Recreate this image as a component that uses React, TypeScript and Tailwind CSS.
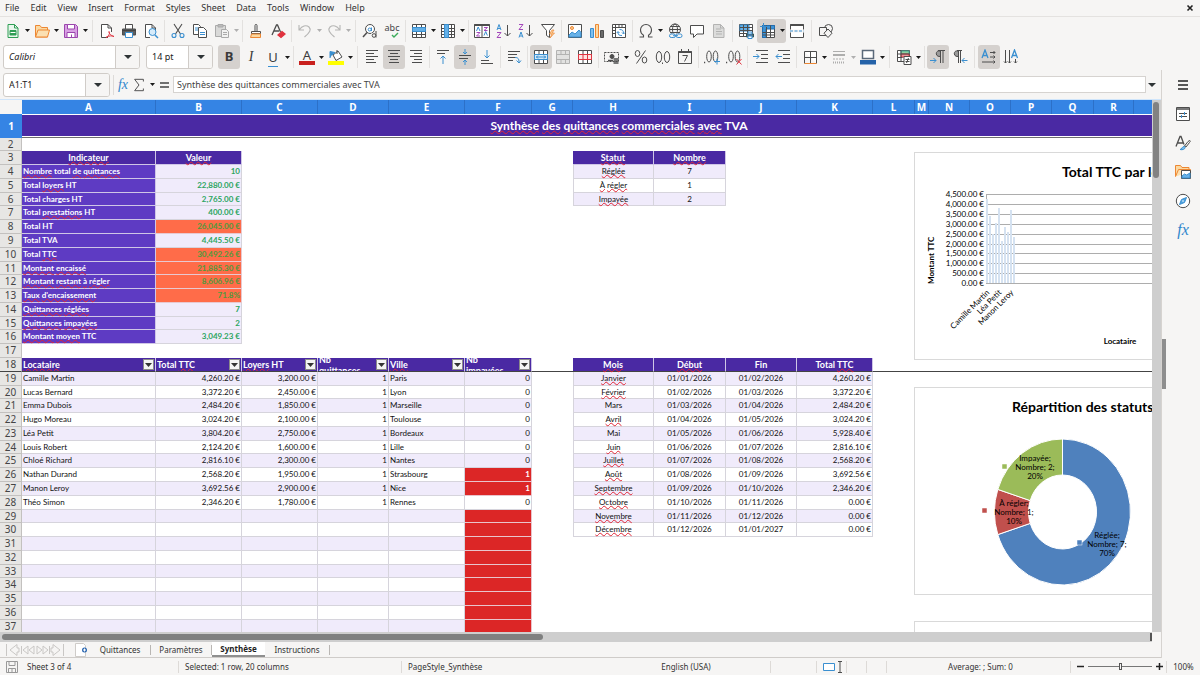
import React from "react";
import clsx from "clsx";

/* ---------- icons ---------- */

const G = "#4d4d4d";
const B = "#3a8fd0";
const O = "#ed8733";
const R = "#e0333f";

const icons: Record<string, React.ReactNode> = {
  new: <g fill="none" stroke="#2f9e55"><path d="M3 1.5h6.500l3.500 3.500v9.500H3z" fill="#e9f7ed" /><path d="M9.500 1.500v3.500H13" /><path d="M5 7.500h6v4.500H5z" fill="#2f9e55" /><path d="M5.500 9.500h5" stroke="#fff" /></g>,
  open: <g stroke={O} strokeLinejoin="round"><path d="M1.500 14V2.500h4.500l1.500 2h6v9.500z" fill="#fbd9a2" /><path d="M1.500 14l2.500-7h11.500l-2 7z" fill="#fbe0b2" /></g>,
  save: <g stroke="#9b46ad"><path d="M1.500 1.500h11l2 2v11h-13z" fill="#d9a0e4" /><path d="M4.500 1.500h7v4.500h-7zM4 9.500h8v5H4z" fill="#fff" /><path d="M8.500 11.500v3" /></g>,
  pdf: <g fill="none" stroke={G}><path d="M9 14.500H2.500v-13H9l3.500 3.500v4" fill="#fff" /><path d="M9 1.500V5h3.500" /><path d="M7 14.500c4-2 4-6 3-6s1 4 5 5c-2-1-5-1-8 1" stroke={R} /></g>,
  print: <g stroke={G}><path d="M4.500 6V1.500h7V6" fill="#fff" /><path d="M1.500 6h13v6h-13z" fill="#5d5f61" /><path d="M4.500 9.500h7v5h-7z" fill="#fff" stroke={B} /><path d="M1 7.500h14" stroke="#444" /></g>,
  preview: <g fill="none" stroke={G}><path d="M7 14.500H2.500v-13H9l3.500 3.500v3" fill="#fff" /><path d="M9 1.500V5h3.500" /><circle cx="9.500" cy="9" r="3.500" stroke={B} fill="#d6ebfa" /><path d="M12 12l3 3" stroke={B} strokeWidth="1.500" /></g>,
  cut: <g fill="none" stroke={G} strokeWidth="1.100"><path d="M4 1l6.500 10M12 1L5.500 11" /><circle cx="4" cy="12.500" r="2" stroke={B} /><circle cx="12" cy="12.500" r="2" stroke={B} /></g>,
  copy: <g fill="#fff" stroke={G}><path d="M1.500 1.500h5l2 2v8h-7z" /><path d="M3 5h3M3 7h3" stroke={B} /><path d="M6.500 4.500h5l3 3v7h-8z" /><path d="M8 9.500h5M8 11.500h5" stroke={B} /></g>,
  paste: <g fill="#d9d9d8" stroke="#aaa"><path d="M1.500 2.500h10v11h-10z" /><path d="M4 1.500h5v2.500H4z" fill="#bbb" /><path d="M7.500 6.500h5l2 2v6h-7z" fill="#f2f2f1" /><path d="M9 9.500h4M9 11.500h4" /></g>,
  brush: <g fill="none" stroke={G}><path d="M7 8V2.500c0-1.500 2-1.500 2 0V8" fill="#fff" /><path d="M3.500 8.500h9v2h-9z" fill="#fff" /><path d="M3.500 11h9v3.500h-10z" fill="#fbd9a2" stroke={O} /></g>,
  clear: <g fill="none" stroke={G} strokeWidth="1.300"><path d="M2 12L6.500 2h1l3 7M4 8h5" /><path d="M8 12l4-3.500 3 2.500-4 3.500z" fill={R} stroke={R} /></g>,
  undo: <g fill="none" stroke="#b5b5b4" strokeWidth="1.100"><path d="M2 2v5h5M2.500 6.500C5 3 9 1.500 12 4c2.500 2.500 1 5.500-4.500 10" /></g>,
  redo: <g fill="none" stroke="#b5b5b4" strokeWidth="1.100"><path d="M14 2v5H9M13.500 6.500C11 3 7 1.500 4 4c-2.500 2.500-1 5.500 4.500 10" /></g>,
  find: <g fill="none" stroke={G}><circle cx="8" cy="6" r="4.500" fill="#fff" /><path d="M5 9.500L1 14" strokeWidth="1.500" /><circle cx="7.700" cy="6.500" r="1.500" stroke={B} /><path d="M9.500 4.500v3.500" stroke={B} /><path d="M9.500 10H15v5.500H9.500z" fill="#f6f5f4" stroke="none" /><circle cx="12" cy="12.500" r="1.800" /><path d="M14 8v6.500" /></g>,
  rowIns: <g stroke={G} fill="#fff"><path d="M1.500 1.500h13v13h-13z" /><path d="M1.500 11.500h13M5.500 1.500v13M10.500 1.500v13" /><path d="M1.500 4.500h13v4h-13z" fill="#63b0e8" stroke={B} /></g>,
  colIns: <g stroke={G} fill="#fff"><path d="M1.500 1.500h13v13h-13z" /><path d="M1.500 5.500h13M1.500 8.500h13M1.500 11.500h13M11.500 1.500v13" /><path d="M4.500 1.500h4v13h-4z" fill="#63b0e8" stroke={B} /></g>,
  sort: <g stroke={G} fill="#fff"><path d="M.5 1.500h15v13H.5zM8 2v12" /><path d="M.5 2h15" strokeWidth="2" /><path d="M2.500 8l1.700-4L6 8M10 12.500l1.700-4 1.700 4" stroke={B} fill="none" /><path d="M2.500 9.500H6l-3.500 3.500H6M10 4.500h3.500L10 7.500h3.500" stroke="#a347ba" fill="none" /></g>,
  sortAsc: <g fill="none" stroke={G}><path d="M1 7l2-5.500L5 7M1.700 5.500h2.600" stroke={B} /><path d="M1 9.500h4L1 14.500h4" stroke="#a347ba" /><path d="M11.500 2v11M8.500 10l3 3 3-3" /></g>,
  sortDesc: <g fill="none" stroke={G}><path d="M1 1.500h4L1 6.500h4" stroke="#a347ba" /><path d="M1 14.500L3 9l2 5.500M1.700 13h2.600" stroke={B} /><path d="M11.500 2v11M8.500 10l3 3 3-3" /></g>,
  filter: <g fill="none" stroke={G}><path d="M1.500 1.500h13l-5 6v7l-3-2v-5z" fill="#fff" /><path d="M12 7l-2.500 4h2.500L10 15l4.500-5H12l2-3z" fill="#fbd09a" stroke={O} strokeWidth=".7" /></g>,
  image: <g stroke={G}><path d="M1.500 1.500h13v13h-13z" fill="#fff" /><path d="M2 14v-2l3-3 3 2 4-4 2 2.500V14z" fill="#68b2e8" stroke={B} /><circle cx="5" cy="5" r="1.500" fill="#fbd09a" stroke={O} /></g>,
  chart: <g><path d="M1.500 5.500h3v9h-3z" fill="#7fc0ee" stroke={B} /><path d="M6.500 1.500h3v13h-3z" fill="#fbd9a2" stroke={O} /><path d="M11.500 7.500h3v7h-3z" fill="#6a6a6a" stroke={G} /></g>,
  pivot: <g fill="none" stroke={G}><path d="M1.500 1.500h13v13h-13z" fill="#fff" /><path d="M2 4.500h12M4.500 2v12M2 7.500h2.500M2 10.500h2.500M8 2v2.500M11 2v2.500" /><path d="M7 9c0 3 1 3.500 4 3.500M5.800 10L7 8.500 8.500 10M8.500 6.500c3 0 4 1 4 4M11 9.500l1.500 1.500L14 9.500" stroke={B} /></g>,
  omega: <path d="M1.500 14h4v-1.800C3.500 11 2.500 9 2.500 7c0-3 2.300-5.500 5.500-5.500s5.500 2.500 5.500 5.500c0 2-1 4-3 5.200V14h4" fill="none" stroke={G} strokeWidth="1.100" />,
  link: <g fill="none" stroke={G}><circle cx="8" cy="6.500" r="5.500" /><ellipse cx="8" cy="6.500" rx="2.500" ry="5.500" /><path d="M2.500 6.500h11M3.500 3.500h9M3.500 9.500h9" /><path d="M2 10.500h12v5H2z" fill="#f6f5f4" stroke="none" /><rect x="2.500" y="11" width="6" height="3.500" rx="1.700" stroke={B} /><rect x="9" y="11" width="6" height="3.500" rx="1.700" stroke={B} /><path d="M6 12.700h5" stroke={B} /></g>,
  comment: <path d="M1.500 2.500h13v8.500H8L4.500 14.500V11h-3z" fill="#fff" stroke={G} />,
  page: <g stroke="#b3b3b2"><path d="M2.500 1.500h7l3.500 3.500v9.500H2.500z" fill="#dcdcdb" /><path d="M9.500 1.500V5H13M5 6h5M5 8.500h6M5 11h6" fill="none" /></g>,
  printArea: <g stroke={G} fill="#fff"><path d="M1.500 1.500h13v12h-13z" /><path d="M2 2h9v6H2z" fill="#63b0e8" stroke={B} /><path d="M5.500 2v11M9.500 2v11M2 4.500h12M2 7.500h12M2 10.500h12" fill="none" /><path d="M8.500 11h7v3h-7z" fill="#5a7184" stroke="#355" /><path d="M10 9h4v2h-4zM10 13h4v2.500h-4z" stroke={B} /></g>,
  freeze: <g stroke={G} fill="#fff"><path d="M2.500 2.500h12v12h-12z" /><path d="M2.500 2.500h12v3.500H6v8.500H2.500z" fill="#3d93d6" stroke="#226cae" /><path d="M2.500 9.500h12M2.500 12h12M6.500 2.500v12M10.500 2.500v12" fill="none" /><path d="M3.500 0v7M0 3.500h7" stroke={B} /></g>,
  split: <g stroke={G} fill="#fff"><path d="M1.500 6.500v-5h13v5M1.500 9.500v5h13v-5" /><path d="M1.500 2h13" strokeWidth="2" /><path d="M1 8h14" stroke={B} strokeDasharray="3 1.500" /></g>,
  shapes: <g fill="#f6f5f4" stroke={G}><circle cx="10.500" cy="5.500" r="4" /><path d="M1.500 4.500h7v8h-7z" /><path d="M10 6l4 4.200-4 4.300-4-4.300z" /></g>,
  alignL: <path d="M2 1.500h12M2 4.500h8M2 7.500h12M2 10.500h8M2 13.500h10" stroke={G} />,
  alignC: <path d="M2 1.500h12M4 4.500h8M2 7.500h12M4 10.500h8M3 13.500h10" stroke={G} />,
  alignR: <path d="M2 1.500h12M6 4.500h8M2 7.500h12M6 10.500h8M4 13.500h10" stroke={G} />,
  vTop: <g fill="none"><path d="M2 1.500h12M2 4.500h8" stroke={G} /><path d="M8 15V7M5.500 9.500L8 7l2.500 2.500" stroke={B} /></g>,
  vMid: <g fill="none"><path d="M2 6.500h12M2 9.500h9" stroke={G} /><path d="M8 0v5M6 3l2 2 2-2M8 16v-5M6 13l2-2 2 2" stroke={B} /></g>,
  vBot: <g fill="none"><path d="M2 11.500h8M2 14.500h12" stroke={G} /><path d="M8 1v8M5.500 6.500L8 9l2.500-2.500" stroke={B} /></g>,
  wrap: <g fill="none"><path d="M2 2.500h12M2 5.500h9M2 8.500h7M2 11.500h5" stroke={G} /><path d="M9 8.500c3 0 4 1 4 5M10.500 11.500l2.500 2.500 2-2.500" stroke={B} /></g>,
  merge: <g stroke={G} fill="#fff"><path d="M1.500 1.500h13v13h-13z" /><path d="M6 1.500v4M10.500 1.500v4M6 10.500v4M10.500 10.500v4" /><path d="M1.500 5.500h13v5h-13z" stroke={B} fill="#d3eafa" /><path d="M3 8h10M5 6.500L3.500 8 5 9.500M11 6.500L12.500 8 11 9.500" stroke={B} fill="none" /></g>,
  unmerge: <g stroke="#b3b3b2" fill="#e2e2e1"><path d="M1.500 1.500h13v13h-13zM1.500 5.500h13M1.500 10.500h13M6 1.500v4M10.500 1.500v4M6 10.500v4M10.500 10.500v4" /></g>,
  splitCell: <g stroke={G} fill="#fff"><path d="M1.500 1.500h13v13h-13zM6 1.500v13M10.500 1.500v13" /><path d="M1.500 5.500h13v5h-13zM6 5.500v5M10.500 5.500v5" stroke={R} fill="#fde3e3" /></g>,
  currency: <g stroke={G} fill="none"><path d="M.5 3.500h14v9H.5z" strokeDasharray="2 1" /><circle cx="8" cy="7.500" r="2" fill={G} /><path d="M4 11.500h5M9.500 10h5M9.500 12h5M9.500 14h5" strokeWidth="1.500" /></g>,
  percent: <g stroke={G} fill="none"><ellipse cx="4.500" cy="4.500" rx="2.300" ry="3" /><ellipse cx="11.500" cy="11" rx="2.300" ry="3" /><path d="M12.500 1.500l-9 13" /></g>,
  number: <g stroke={G} fill="none"><ellipse cx="4" cy="8" rx="2.700" ry="5.500" /><ellipse cx="12" cy="8" rx="2.700" ry="5.500" /><path d="M7.500 13.500v1.500" /></g>,
  date: <g stroke={G} fill="none"><path d="M1.500 2.500h13v12h-13z" /><path d="M1.500 3h13" strokeWidth="2" /><path d="M4.500 0v3M11.500 0v3M5.500 6.500h5l-3 6" /></g>,
  addDec: <g stroke={G} fill="none"><path d="M0 13.500h1.200" strokeWidth="1.500" /><ellipse cx="5" cy="7.500" rx="2.300" ry="5.500" /><ellipse cx="11.500" cy="7.500" rx="2.300" ry="5.500" /><path d="M13 9.500v6M10 12.500h6" stroke={B} /></g>,
  remDec: <g stroke={G} fill="none"><path d="M0 13.500h1.200" strokeWidth="1.500" /><ellipse cx="5" cy="7.500" rx="2.300" ry="5.500" /><ellipse cx="11.500" cy="7.500" rx="2.300" ry="5.500" /><path d="M10.500 10l5 5.500M15.500 10l-5 5.500" stroke={R} /></g>,
  indent: <g fill="none"><path d="M3 1.500h12M8 5.500h7M8 9.500h7M3 13.500h12" stroke={G} /><path d="M0 7.500h6M3.500 5L6 7.500 3.500 10" stroke={B} /></g>,
  outdent: <g fill="none"><path d="M3 1.500h12M8 5.500h7M8 9.500h7M3 13.500h12" stroke={G} /><path d="M7 7.500H1M3.500 5L1 7.500 3.500 10" stroke={B} /></g>,
  borders: <g fill="#fff" stroke={G}><path d="M2.500 2.500h12v12M2.500 2.500v12M8.500 2.500v12M2.500 8.500h12" /><path d="M2.500 14.500h12" stroke={O} /></g>,
  lineStyle: <g stroke="#aeaead"><path d="M2 2.500h12" strokeWidth="1" /><path d="M2 6h12" strokeWidth="2" /><path d="M2 10h12" strokeDasharray="2 1" /><path d="M2 13.500h12" strokeWidth="2" strokeDasharray="1 1" /></g>,
  lineColor: <g><path d="M2.500 1.500h11v8h-11z" fill="#fff" stroke="#5b6a7a" strokeWidth="1.500" /><path d="M0 11h16v4.500H0z" fill="#2462a8" /></g>,
  condFmt: <g stroke={G}><path d="M1.500 1.500h12v11h-12z" fill="#fff" /><path d="M5 2h8v3H5z" fill="#8fd39e" stroke="#4a9" /><path d="M5 5h8v3H5z" fill="#f0959b" stroke={R} /><path d="M1.500 5h12M1.500 8.500h5M5 1.500v11" fill="none" /><path d="M8 7.500h7v8H8z" fill="#fff" /><path d="M9.500 10.500h4M9.500 12.500h4M12.500 9l-2 5" /></g>,
  ltr: <g fill="none" stroke={G}><path d="M8 1.500h7M10.500 2v12M13 2v12" /><path d="M10 2c-5-1-5 6 0 5.500" fill="#9a9a9a" /><path d="M0 11.500h6M3.500 9L6 11.500 3.500 14" stroke={B} /></g>,
  rtl: <g fill="none" stroke={G}><path d="M5 1.500h5M6.500 2v12M8.500 2v12" /><path d="M6 2c-5-1-5 6 0 5.500" fill="#9a9a9a" /><path d="M15.500 11.500H10M12.500 9L10 11.500l2.500 2.500" stroke={B} /></g>,
  textH: <g fill="none" stroke={G}><path d="M1 9l3-8 3 8M2 6.500h4" stroke={B} strokeWidth="1.300" /><path d="M9 3.500h5M12.500 2L14 3.500 12.500 5M9 8h5M12.500 6.500L14 8l-1.500 1.500M1 13h13M12.500 11.500L14 13l-1.500 1.500" /></g>,
  textV: <g fill="none" stroke={G}><path d="M8.500 9l3-8 3 8M9.500 6.500h4" stroke={B} strokeWidth="1.300" /><path d="M2.500 1v13M1 12.500L2.500 14 4 12.500M6.500 1v13M5 12.500L6.500 14 8 12.500M12.500 10v4M11 12.500l1.500 1.500 1.500-1.500" /></g>,
  sigma: <path d="M13 4V1.500H3L8 8l-5 6.500h10V12" fill="none" stroke={G} strokeWidth="1.100" />,
  props: <g fill="none" stroke={G}><path d="M1.500 1.500h13v13h-13z" fill="#fff" /><path d="M1.500 3h13" strokeWidth="1.500" /><path d="M4 7.500h8M4 10.500h8" /><path d="M9.500 6v3M6.500 9v3" stroke={B} /></g>,
  styles: <g fill="none" stroke={G} strokeWidth="1.300"><path d="M1 11.500L5 1.500h1l3 8M3 8h5" /><path d="M14.500 5.500c1 0 1 1 0 2L11 12l-1.500-1 3.500-4.500z" strokeWidth="1" /><path d="M5 14.500c2 0 2-3.500 4.500-3 2 1.500-1 4-4.500 3z" fill="#7fc0ee" stroke={B} strokeWidth="1" /></g>,
  gallery: <g stroke={O}><path d="M.5 12.500v-11h5l1.500 2h7v3" fill="#fbd9a2" /><path d="M.5 12.500l3-7h12v2" fill="#fbe0b2" /><path d="M6.500 6.500h9v8h-9z" fill="#fff" stroke={G} /><path d="M7 14v-2l2.500-2 2 1 3.500-2v5z" fill="#68b2e8" stroke={B} /></g>,
  navigator: <g fill="none" stroke={G}><circle cx="8" cy="8" r="6.700" fill="#fff" /><path d="M11.500 4.500L9.500 9.500l-5 2 2-5z" fill="#4ea3e0" stroke={B} /><circle cx="8" cy="8" r=".8" fill="#fff" stroke="none" /></g>,
};

function Icon({ name }: { name: string }) {
  return (
    <svg viewBox="0 0 16 16" className="size-4 shrink-0" aria-hidden="true">
      {icons[name]}
    </svg>
  );
}

function Caret({ muted }: { muted?: boolean }) {
  return (
    <svg viewBox="0 0 5 3" className="w-[5px] h-[3px] shrink-0" aria-hidden="true">
      <path d="M0 0h5L2.500 3z" fill={muted ? "#b0b0b0" : "#1a1a1a"} />
    </svg>
  );
}

function FxIcon({ small }: { small?: boolean }) {
  return <span className={clsx("font-['Liberation_Serif',serif] italic leading-4 text-[#2f86cc]", small ? "text-sm" : "text-base")}>fx</span>;
}

type ToolProps = {
  label: string;
  icon?: string;
  active?: boolean;
  menu?: boolean;
  muted?: boolean;
  children?: React.ReactNode;
};

function Tool({ label, icon, active, menu, muted, children }: ToolProps) {
  return (
    <button
      aria-label={label}
      className={clsx(
        "h-6 shrink-0 flex items-center rounded-[3px]",
        menu ? "w-[29px] pl-[3px] gap-1" : "w-[22px] justify-center",
        active && "bg-[#d5d1ce]"
      )}
    >
      {icon ? <Icon name={icon} /> : children}
      {menu && <Caret muted={muted} />}
    </button>
  );
}

function Sep({ wide }: { wide?: boolean }) {
  return (
    <div className={clsx("shrink-0 flex justify-center", wide ? "w-[7px]" : "w-[5px]")}>
      <div className="w-px h-[22px] bg-[#e3e1df]" />
    </div>
  );
}

/* ---------- toolbars ---------- */

const menus = ["File", "Edit", "View", "Insert", "Format", "Styles", "Sheet", "Data", "Tools", "Window", "Help"];

function MenuBar() {
  return (
    <nav className="h-[17px] shrink-0 flex items-center pl-[5px] pr-1.5 border-b border-[#e4e2e0]">
      <div className="flex gap-[11px]">
        {menus.map((m) => (
          <button key={m}>{m}</button>
        ))}
      </div>
      <button aria-label="Close document" className="ml-auto">
        <svg viewBox="0 0 8 8" className="size-2">
          <path d="M1.500 1.500l5 5M6.500 1.500l-5 5" stroke="#222" strokeWidth="1.600" />
        </svg>
      </button>
    </nav>
  );
}

function StandardBar() {
  return (
    <div className="h-[27px] shrink-0 flex items-center pl-0.5">
      <Tool label="New" icon="new" menu />
      <Tool label="Open" icon="open" menu />
      <Tool label="Save" icon="save" menu />
      <Sep wide />
      <Tool label="Export as PDF" icon="pdf" />
      <Tool label="Print" icon="print" />
      <Tool label="Print Preview" icon="preview" />
      <Sep />
      <Tool label="Cut" icon="cut" />
      <Tool label="Copy" icon="copy" />
      <Tool label="Paste" icon="paste" menu muted />
      <Sep />
      <Tool label="Clone Formatting" icon="brush" />
      <Tool label="Clear Formatting" icon="clear" />
      <Sep />
      <Tool label="Undo" icon="undo" menu muted />
      <Tool label="Redo" icon="redo" menu muted />
      <Sep wide />
      <Tool label="Find and Replace" icon="find" />
      <Tool label="Spelling">
        <span className="flex flex-col items-center text-[9px] leading-[9px] text-[#444]">
          abc
          <svg viewBox="0 0 8 6" className="w-2 h-1.5 self-end">
            <path d="M1 3l2 2 4-4" fill="none" stroke="#3bab5a" strokeWidth="1.400" />
          </svg>
        </span>
      </Tool>
      <Sep />
      <Tool label="Row" icon="rowIns" menu />
      <Tool label="Column" icon="colIns" menu />
      <Sep />
      <Tool label="Sort" icon="sort" />
      <Tool label="Sort Ascending" icon="sortAsc" />
      <Tool label="Sort Descending" icon="sortDesc" />
      <Tool label="AutoFilter" icon="filter" />
      <Sep />
      <Tool label="Insert Image" icon="image" />
      <Tool label="Insert Chart" icon="chart" />
      <Tool label="Pivot Table" icon="pivot" />
      <Sep />
      <Tool label="Special Character" icon="omega" menu />
      <Tool label="Insert Hyperlink" icon="link" />
      <Tool label="Insert Comment" icon="comment" />
      <Tool label="Headers and Footers" icon="page" />
      <Sep />
      <Tool label="Print Area" icon="printArea" />
      <Tool label="Freeze Rows and Columns" icon="freeze" menu active />
      <Tool label="Split Window" icon="split" />
      <Sep wide />
      <Tool label="Draw Functions" icon="shapes" />
    </div>
  );
}

function Combo({ label, value, className, inputClass }: { label: string; value: string; className: string; inputClass?: string }) {
  return (
    <div className={clsx("flex shrink-0 items-stretch rounded-[3px] border border-[#d0ccc8] bg-white overflow-hidden", className)}>
      <input aria-label={label} defaultValue={value} className={clsx("min-w-0 flex-1 px-[5px] outline-none text-[#222]", inputClass)} />
      <button aria-label={`${label} list`} className="w-6 flex items-center justify-center border-l border-[#d0ccc8] bg-[#f6f5f4]">
        <svg viewBox="0 0 8 4" className="w-2 h-1">
          <path d="M0 0h8L4 4z" fill="#2e3436" />
        </svg>
      </button>
    </div>
  );
}

function FormattingBar() {
  return (
    <div className="h-[26px] shrink-0 flex items-center pl-[3px]">
      <Combo label="Font Name" value="Calibri" className="w-[137px] h-6 mr-1.5" inputClass="italic" />
      <Combo label="Font Size" value="14 pt" className="w-[67px] h-6 mr-[5px]" />
      <Tool label="Bold" active>
        <span className="font-bold text-[13px] text-[#3a3a3a]">B</span>
      </Tool>
      <Tool label="Italic">
        <span className="font-['Liberation_Serif',serif] italic text-sm text-[#3a3a3a]">I</span>
      </Tool>
      <Tool label="Underline" menu>
        <span className="w-4 text-center text-[13px] leading-[13px] text-[#3a3a3a]">
          <span className="border-b border-[#3a8fd0]">U</span>
        </span>
      </Tool>
      <Sep />
      <Tool label="Font Color" menu>
        <span className="w-4 text-center text-[13px] leading-3 text-[#3a3a3a] border-b-4 border-[#c9211e]">A</span>
      </Tool>
      <Tool label="Highlighting Color" menu>
        <svg viewBox="0 0 16 16" className="size-4">
          <path d="M5 6l5-4 4 6-6 3.500z" fill="#fff" stroke={G} />
          <path d="M2 9V2.500l5 1L4 6" fill={B} stroke={B} />
          <path d="M9 1v4" stroke={G} />
          <path d="M0 12h16v4H0z" fill="#ffff00" />
        </svg>
      </Tool>
      <Sep wide />
      <Tool label="Align Left" icon="alignL" />
      <Tool label="Center Horizontally" icon="alignC" active />
      <Tool label="Align Right" icon="alignR" />
      <Sep />
      <Tool label="Align Top" icon="vTop" />
      <Tool label="Center Vertically" icon="vMid" active />
      <Tool label="Align Bottom" icon="vBot" />
      <Sep />
      <Tool label="Wrap Text" icon="wrap" />
      <Sep />
      <Tool label="Merge and Center" icon="merge" active />
      <Tool label="Merge Cells" icon="unmerge" />
      <Tool label="Unmerge Cells" icon="splitCell" />
      <Sep />
      <Tool label="Format as Currency" icon="currency" menu />
      <Tool label="Format as Percent" icon="percent" />
      <Tool label="Format as Number" icon="number" />
      <Tool label="Format as Date" icon="date" />
      <Sep />
      <Tool label="Add Decimal Place" icon="addDec" />
      <Tool label="Delete Decimal Place" icon="remDec" />
      <Sep />
      <Tool label="Increase Indent" icon="indent" />
      <Tool label="Decrease Indent" icon="outdent" />
      <Sep />
      <Tool label="Borders" icon="borders" menu />
      <Tool label="Border Style" icon="lineStyle" menu muted />
      <Tool label="Border Color" icon="lineColor" menu />
      <Sep wide />
      <Tool label="Conditional Formatting" icon="condFmt" menu />
      <Sep />
      <Tool label="Left-To-Right" icon="ltr" active />
      <Tool label="Right-To-Left" icon="rtl" />
      <Sep wide />
      <Tool label="Text Horizontal" icon="textH" active />
      <Tool label="Text Vertical" icon="textV" />
    </div>
  );
}

function FormulaBar() {
  return (
    <div className="h-[30px] shrink-0 flex items-center pl-[3px] pr-[5px] border-b border-[#cfe5fb]">
      <Combo label="Name Box" value="A1:T1" className="w-[107px] h-6" />
      <div className="w-px h-5 ml-[3px] bg-[#dddbd9]" />
      <button aria-label="Function Wizard" className="w-[18px]">
        <FxIcon small />
      </button>
      <button aria-label="Select Function" className="flex items-center gap-1 w-6">
        <svg viewBox="0 0 16 16" className="size-3.5">{icons.sigma}</svg>
        <Caret />
      </button>
      <button aria-label="Formula" className="w-[17px] flex justify-center">
        <svg viewBox="0 0 9 6" className="w-[9px] h-1.5">
          <path d="M0 1h9M0 5h9" stroke="#444" strokeWidth="1.500" />
        </svg>
      </button>
      <input
        aria-label="Input line"
        defaultValue="Synthèse des quittances commerciales avec TVA"
        className="flex-1 min-w-0 h-[17px] px-[3px] bg-white border border-[#d6d3d0] outline-none text-[#444]"
      />
      <button aria-label="Expand Formula Bar" className="pl-0.5">
        <svg viewBox="0 0 8 4" className="w-2 h-1">
          <path d="M0 0h8L4 4z" fill="#2e3436" />
        </svg>
      </button>
    </div>
  );
}

/* ---------- sheet ---------- */

const columns = [
  { name: "A", w: "w-[134px]" },
  { name: "B", w: "w-[86px]" },
  { name: "C", w: "w-[76px]" },
  { name: "D", w: "w-[71px]" },
  { name: "E", w: "w-[76px]" },
  { name: "F", w: "w-[67px]" },
  { name: "G", w: "w-[41px]" },
  { name: "H", w: "w-[81px]" },
  { name: "I", w: "w-[72px]" },
  { name: "J", w: "w-[71px]" },
  { name: "K", w: "w-[76px]" },
  { name: "L", w: "w-[42px]" },
  { name: "M", w: "w-[14px]" },
  { name: "N", w: "w-[41px]" },
  { name: "O", w: "w-[41px]" },
  { name: "P", w: "w-[41px]" },
  { name: "Q", w: "w-[42px]" },
  { name: "R", w: "w-[40px]" },
  { name: "S", w: "w-[41px]" },
  { name: "T", w: "w-[41px]" },
];

// a leading ~ marks a word that the spell checker underlines
const indicators: [string, string, boolean?][] = [
  ["~Nombre total ~de ~quittances", "10"],
  ["Total ~loyers HT", "22,880.00 €"],
  ["Total charges HT", "2,765.00 €"],
  ["Total ~prestations HT", "400.00 €"],
  ["Total HT", "26,045.00 €", true],
  ["Total TVA", "4,445.50 €"],
  ["Total ~TTC", "30,492.26 €", true],
  ["~Montant ~encaissé", "21,885.30 €", true],
  ["~Montant ~restant ~à ~régler", "8,606.96 €", true],
  ["~Taux ~d'encaissement", "71.8%", true],
  ["~Quittances ~réglées", "7"],
  ["~Quittances ~impayées", "2"],
  ["~Montant ~moyen TTC", "3,049.23 €"],
];

const statuses = [
  ["~Réglée", "7"],
  ["~À ~régler", "1"],
  ["~Impayée", "2"],
];

const tenants = [
  ["Camille Martin", "4,260.20 €", "3,200.00 €", "1", "Paris", "0"],
  ["Lucas Bernard", "3,372.20 €", "2,450.00 €", "1", "Lyon", "0"],
  ["Emma Dubois", "2,484.20 €", "1,850.00 €", "1", "Marseille", "0"],
  ["Hugo Moreau", "3,024.20 €", "2,100.00 €", "1", "Toulouse", "0"],
  ["Léa Petit", "3,804.20 €", "2,750.00 €", "1", "Bordeaux", "0"],
  ["Louis Robert", "2,124.20 €", "1,600.00 €", "1", "Lille", "0"],
  ["Chloé Richard", "2,816.10 €", "2,300.00 €", "1", "Nantes", "0"],
  ["Nathan Durand", "2,568.20 €", "1,950.00 €", "1", "Strasbourg", "1"],
  ["Manon Leroy", "3,692.56 €", "2,900.00 €", "1", "Nice", "1"],
  ["Théo Simon", "2,346.20 €", "1,780.00 €", "1", "Rennes", "0"],
];

const months = [
  ["~Janvier", "01/01/2026", "01/02/2026", "4,260.20 €"],
  ["~Février", "01/02/2026", "01/03/2026", "3,372.20 €"],
  ["Mars", "01/03/2026", "01/04/2026", "2,484.20 €"],
  ["~Avril", "01/04/2026", "01/05/2026", "3,024.20 €"],
  ["Mai", "01/05/2026", "01/06/2026", "5,928.40 €"],
  ["~Juin", "01/06/2026", "01/07/2026", "2,816.10 €"],
  ["~Juillet", "01/07/2026", "01/08/2026", "2,568.20 €"],
  ["~Août", "01/08/2026", "01/09/2026", "3,692.56 €"],
  ["~Septembre", "01/09/2026", "01/10/2026", "2,346.20 €"],
  ["~Octobre", "01/10/2026", "01/11/2026", "0.00 €"],
  ["~Novembre", "01/11/2026", "01/12/2026", "0.00 €"],
  ["~Décembre", "01/12/2026", "01/01/2027", "0.00 €"],
];

function Spelled({ text }: { text: string }) {
  return (
    <>
      {text.split(" ").map((word, i) => (
        <React.Fragment key={i}>
          {i > 0 && " "}
          {word.startsWith("~") ? (
            <span className="underline decoration-wavy decoration-[#e02636] decoration-1 underline-offset-0 [text-decoration-skip-ink:none]">
              {word.slice(1)}
            </span>
          ) : (
            word
          )}
        </React.Fragment>
      ))}
    </>
  );
}

const head = "bg-[#4a29a3] text-white font-bold text-[9px] border-[#cfc6e6]";
const grid = "border-[#d6d4dc]";

function Cell({ text = "", className }: { text?: string; className?: string }) {
  return (
    <td className={clsx("border-r border-b px-px whitespace-nowrap", className)}>
      <Spelled text={text} />
    </td>
  );
}

function FilterCell({ text, wrap }: { text: string; wrap?: boolean }) {
  return (
    <th scope="col" className={clsx("border-r pl-px text-left", head)}>
      <div className="flex items-center h-[13px] overflow-hidden">
        <span className={clsx("flex-1", wrap && "whitespace-pre-line")}>
          <Spelled text={text} />
        </span>
        <button aria-label={`Filter ${text.replace("~", "")}`} className="size-[11px] shrink-0 mr-px bg-[#f4f4f4] border border-[#8a8a8a] flex items-center justify-center">
          <svg viewBox="0 0 7 4" className="w-[7px] h-1">
            <path d="M0 0h7L3.500 4z" fill="#333" />
          </svg>
        </button>
      </div>
    </th>
  );
}

const isShort = (n: number) => n === 2 || n % 9 === 2 || n % 9 === 6;

function leftCells(n: number) {
  if (n === 3) {
    return (
      <>
        <Cell text="~Indicateur" className={clsx(head, "text-center")} />
        <Cell text="~Valeur" className={clsx(head, "text-center")} />
        <td colSpan={4} />
      </>
    );
  }
  if (n >= 4 && n <= 16) {
    const [label, value, alert] = indicators[n - 4];
    return (
      <>
        <Cell text={label} className="bg-[#5e3bc3] text-white font-bold border-[#cfc6e6]" />
        <Cell text={value} className={clsx("text-right font-bold", alert ? "bg-[#ff6c49] text-[#4f9a3c] border-[#e8c8d0]" : ["bg-[#f0ebfb] text-[#2ba55f]", grid])} />
        <td colSpan={4} />
      </>
    );
  }
  if (n === 18) {
    return (
      <>
        <FilterCell text="~Locataire" />
        <FilterCell text="Total ~TTC" />
        <FilterCell text="~Loyers HT" />
        <FilterCell text={"Nb\nquittances"} wrap />
        <FilterCell text="~Ville" />
        <FilterCell text={"Nb\nimpayées"} wrap />
      </>
    );
  }
  if (n >= 19) {
    const row = tenants[n - 19] ?? ["", "", "", "", "", ""];
    const bg = n % 2 ? "bg-[#f0ebfb]" : "bg-white";
    return row.map((v, i) => {
      const late = i === 5 && v !== "0";
      return (
        <Cell
          key={i}
          text={v}
          className={clsx(i !== 0 && i !== 4 && "text-right", late ? "bg-[#dc2626] text-white font-bold border-[#e9c3cb]" : [bg, grid])}
        />
      );
    });
  }
  return <td colSpan={6} />;
}

function rightCells(n: number) {
  if (n === 3) {
    return (
      <>
        <Cell text="~Statut" className={clsx(head, "text-center")} />
        <Cell text="~Nombre" className={clsx(head, "text-center")} />
        <td colSpan={11} />
      </>
    );
  }
  if (n >= 4 && n <= 6) {
    const bg = n % 2 ? "bg-white" : "bg-[#f0ebfb]";
    return (
      <>
        <Cell text={statuses[n - 4][0]} className={clsx("text-center border-l", bg, grid)} />
        <Cell text={statuses[n - 4][1]} className={clsx("text-center", bg, grid)} />
        <td colSpan={11} />
      </>
    );
  }
  if (n === 18) {
    return (
      <>
        {["~Mois", "~Début", "Fin", "Total ~TTC"].map((t) => (
          <th key={t} scope="col" className={clsx("border-r text-center", head)}>
            <Spelled text={t} />
          </th>
        ))}
        <td colSpan={9} />
      </>
    );
  }
  if (n >= 19 && n <= 30) {
    const bg = n % 2 ? "bg-[#f0ebfb]" : "bg-white";
    return (
      <>
        {months[n - 19].map((v, i) => (
          <Cell key={i} text={v} className={clsx(i === 3 ? "text-right" : "text-center", i === 0 && "border-l", bg, grid)} />
        ))}
        <td colSpan={9} />
      </>
    );
  }
  return <td colSpan={13} />;
}

function Sheet() {
  const rows = Array.from({ length: 36 }, (_, i) => i + 2);
  return (
    <table className="table-fixed border-separate border-spacing-0 w-[1216px] font-['Lato',sans-serif] text-[8px] leading-[11px] text-[#111]">
      <colgroup>
        <col className="w-[22px]" />
        {columns.map((c) => (
          <col key={c.name} className={c.w} />
        ))}
      </colgroup>
      <thead className="font-['Noto_Sans',sans-serif] text-[10px]">
        <tr className="h-3.5">
          <td className="bg-[#f6f5f4]" />
          {columns.map((c) => (
            <th key={c.name} scope="col" className="bg-[#3584e4] text-white font-bold border-r border-[#2c70c8] overflow-hidden">
              {c.name === "S" || c.name === "T" ? "" : c.name}
            </th>
          ))}
        </tr>
      </thead>
      <tbody>
        <tr className="h-6">
          <th scope="row" className="bg-[#3584e4] text-white font-['Noto_Sans',sans-serif] text-[10px]">1</th>
          <td colSpan={20} className="border-b border-[#6e6e6e] pt-px pb-px">
            <div className="h-[21px] bg-[#4a29a3] flex items-center justify-center text-white font-bold text-xs">
              <span>
                <Spelled text="~Synthèse ~des ~quittances ~commerciales ~avec TVA" />
              </span>
            </div>
          </td>
        </tr>
        {rows.map((n) => (
          <tr key={n} className={clsx(isShort(n) ? "h-[13px]" : "h-3.5", n === 18 && "[&>*]:border-b [&>*]:border-b-[#444]")}>
            <th scope="row" className="bg-[#e7e6e4] border-r border-b border-[#c3c1bf] font-normal font-['Noto_Sans',sans-serif] text-[10px] text-[#444]">
              {n}
            </th>
            {leftCells(n)}
            <td />
            {rightCells(n)}
          </tr>
        ))}
      </tbody>
    </table>
  );
}

const ticks = ["4,500.00 €", "4,000.00 €", "3,500.00 €", "3,000.00 €", "2,500.00 €", "2,000.00 €", "1,500.00 €", "1,000.00 €", "500.00 €", "0.00 €"];
const totals = [4260, 3372, 2484, 3024, 3804, 2124, 2816, 2568, 3692, 2346];

function BarChart() {
  return (
    <svg width="420" height="208" className="font-['Lato',sans-serif] bg-white border border-[#d9d9d9]">
      <text x="147" y="24" fontSize="14" fontWeight="700">Total TTC par locataire</text>
      {ticks.map((t, i) => {
        const y = 41 + Math.round(i * 9.9);
        return (
          <g key={t}>
            <path d={`M71 ${y}.5H400`} stroke="#adadad" />
            <text x="69" y={y + 3} fontSize="8" textAnchor="end">{t}</text>
          </g>
        );
      })}
      <path d="M71.500 41v90" stroke="#adadad" />
      {totals.map((v, i) => {
        const h = Math.round(v / 50.5);
        return <rect key={i} x={71 + i * 3} y={130 - h} width="2" height={h} fill="#d5e2f1" />;
      })}
      <text transform="translate(19 131) rotate(-90)" fontSize="8" fontWeight="700">Montant TTC</text>
      <g fontSize="8" textAnchor="end">
        <text transform="translate(75 140) rotate(-45)">Camille Martin</text>
        <text transform="translate(87 140) rotate(-45)">Léa Petit</text>
        <text transform="translate(99 140) rotate(-45)">Manon Leroy</text>
      </g>
      <text x="205" y="191" fontSize="8" fontWeight="700" textAnchor="middle">Locataire</text>
    </svg>
  );
}

// point on an ellipse centred on the donut, fraction measured clockwise from the top
function at(f: number, rx: number, ry: number) {
  const a = f * 2 * Math.PI;
  return `${(147.5 + rx * Math.sin(a)).toFixed(1)} ${(124 - ry * Math.cos(a)).toFixed(1)}`;
}

function slice(from: number, to: number) {
  const big = to - from > 0.5 ? 1 : 0;
  return `M${at(from, 68, 73)}A68 73 0 ${big} 1 ${at(to, 68, 73)}L${at(to, 34, 37)}A34 37 0 ${big} 0 ${at(from, 34, 37)}Z`;
}

const slices = [
  { label: "Réglée;", line: "Nombre; 7;", pct: "70%", from: 0, to: 0.7, fill: "#4f81bd", x: 192, y: 150, kx: 162, ky: 152 },
  { label: "À régler;", line: "Nombre; 1;", pct: "10%", from: 0.7, to: 0.8, fill: "#c0504d", x: 99, y: 118, kx: 67, ky: 120 },
  { label: "Impayée;", line: "Nombre; 2;", pct: "20%", from: 0.8, to: 1, fill: "#9bbb59", x: 120, y: 73, kx: 87, ky: 76 },
];

function DonutChart() {
  return (
    <svg width="420" height="208" className="font-['Lato',sans-serif] bg-white border border-[#d9d9d9]">
      <text x="97" y="24" fontSize="14" fontWeight="700">Répartition des statuts</text>
      {slices.map((s) => (
        <path key={s.label} d={slice(s.from, s.to)} fill={s.fill} stroke="#fff" />
      ))}
      {slices.map((s) => (
        <g key={s.label} fontSize="8" textAnchor="middle">
          <rect x={s.kx} y={s.ky} width="5" height="5" fill={s.fill} stroke="#fff" strokeWidth=".5" />
          <text x={s.x} y={s.y}>{s.label}</text>
          <text x={s.x} y={s.y + 9}>{s.line}</text>
          <text x={s.x} y={s.y + 18}>{s.pct}</text>
        </g>
      ))}
    </svg>
  );
}

/* ---------- bottom ---------- */

function SheetTabs() {
  return (
    <div className="h-4 shrink-0 flex items-center border-b border-[#cfccc9] text-[8px]">
      <svg viewBox="0 0 60 12" className="w-[60px] h-3 ml-[5px]" fill="none" stroke="#c9c7c5">
        <path d="M1.500 0v12M12 .5L5 6l7 5.500V8h2V4h-2zM16.500 2v8M23 2l-5 4 5 4zM29 2l-5 4 5 4zM32 2l5 4-5 4zM38 2l5 4-5 4zM44.500 2v8M48 .5L55 6l-7 5.500V8h-2V4h2zM58.500 0v12" />
      </svg>
      <button aria-label="Add sheet" className="ml-2.5">
        <svg viewBox="0 0 14 14" className="size-3.5">
          <path d="M.5.5h8l2 2v11H.5z" fill="#fff" stroke="#cfccc9" />
          <circle cx="9.500" cy="7" r="2.500" fill="#2a66b0" />
          <path d="M9.500 5.500v3M8 7h3" stroke="#fff" />
        </svg>
      </button>
      <button className="w-[61px] h-2.5 ml-px leading-[10px] border-r border-[#b9b6b3]">Quittances</button>
      <button className="w-[61px] h-2.5 leading-[10px] border-r border-[#b9b6b3]">Paramètres</button>
      <button className="w-[53px] h-[15px] leading-[13px] bg-white font-bold text-[#222] border-b-2 border-[#8f8f8f]">Synthèse</button>
      <button className="w-[65px] h-2.5 leading-[10px] border-r border-[#b9b6b3]">Instructions</button>
    </div>
  );
}

function StatusBar() {
  return (
    <footer className="h-[17px] shrink-0 flex items-center text-[8px] text-[#333]">
      <div className="w-[179px] h-3 flex items-center gap-[9px] pl-1.5 border-r border-[#dddad7]">
        <svg viewBox="0 0 12 12" className="size-3" fill="none" stroke="#999">
          <path d="M.5.5h11v11H.5zM3 .5v4h6v-4M2.500 11.500v-4h7v4M6 8v3" />
        </svg>
        <span>Sheet 3 of 4</span>
      </div>
      <div className="w-[223px] h-3 flex items-center pl-1.5 border-r border-[#dddad7]">Selected: 1 row, 20 columns</div>
      <div className="w-[200px] flex items-center pl-1.5">PageStyle_Synthèse</div>
      <div className="flex-1 h-3 flex items-center justify-center border-r border-[#dddad7]">English (USA)</div>
      <div className="w-[46px] h-3 border-r border-[#dddad7]" />
      <div className="w-[30px] h-3 flex items-center gap-1 pl-1.5 border-r border-[#dddad7]">
        <svg viewBox="0 0 20 12" className="w-5 h-3" fill="none">
          <path d="M.5 2.500h11v7H.5z" stroke={B} fill="#fff" />
          <path d="M17 1v10M15 .5h4M15 11.500h4" stroke={G} />
        </svg>
      </div>
      <div className="w-5 h-3 border-r border-[#dddad7]" />
      <div className="w-5 h-3 border-r border-[#dddad7]" />
      <div className="w-[184px] h-3 flex items-center justify-center pl-1 border-r border-[#dddad7]">Average: ; Sum: 0</div>
      <div className="w-[96px] h-3 flex items-center gap-1 pl-1.5 border-r border-[#dddad7]">
        <button aria-label="Zoom out">
          <svg viewBox="0 0 7 7" className="size-[7px]"><path d="M0 3.500h7" stroke="#222" strokeWidth="1.500" /></svg>
        </button>
        <input
          type="range"
          aria-label="Zoom"
          defaultValue={50}
          className="w-[64px] h-3 appearance-none bg-transparent [&::-webkit-slider-runnable-track]:h-px [&::-webkit-slider-runnable-track]:bg-[#777] [&::-webkit-slider-thumb]:appearance-none [&::-webkit-slider-thumb]:w-[3px] [&::-webkit-slider-thumb]:h-[7px] [&::-webkit-slider-thumb]:-mt-[3px] [&::-webkit-slider-thumb]:bg-[#f6f5f4] [&::-webkit-slider-thumb]:border [&::-webkit-slider-thumb]:border-[#555]"
        />
        <button aria-label="Zoom in">
          <svg viewBox="0 0 7 7" className="size-[7px]"><path d="M0 3.500h7M3.500 0v7" stroke="#222" strokeWidth="1.500" /></svg>
        </button>
      </div>
      <div className="w-[33px] text-center">100%</div>
    </footer>
  );
}

function Sidebar() {
  return (
    <aside className="w-[39px] shrink-0 flex items-stretch border-l border-[#d6d3d0]">
      <div className="w-1 flex flex-col justify-center">
        <div className="h-[50px] bg-[#8e8e8e]" />
      </div>
      <div className="flex-1 flex flex-col items-center pt-[3px] gap-[5px]">
        <button aria-label="Sidebar Settings" className="h-6 w-6 flex items-center justify-center">
          <svg viewBox="0 0 10 10" className="size-2.5"><path d="M0 1h10M0 5h10M0 9h10" stroke="#222" strokeWidth="1.500" /></svg>
        </button>
        <Tool label="Properties" icon="props" />
        <Tool label="Styles" icon="styles" />
        <Tool label="Gallery" icon="gallery" />
        <Tool label="Navigator" icon="navigator" />
        <Tool label="Functions">
          <FxIcon />
        </Tool>
      </div>
    </aside>
  );
}

export default function App() {
  return (
    <div className="h-screen w-full flex flex-col overflow-hidden bg-[#f6f5f4] font-['Noto_Sans',sans-serif] text-[9px] text-[#333]">
      <MenuBar />
      <StandardBar />
      <FormattingBar />
      <div className="flex-1 min-h-0 flex">
        <main className="flex-1 min-w-0 flex flex-col">
          <FormulaBar />
          <div className="flex-1 min-h-0 flex">
            <div className="relative flex-1 min-w-0 overflow-hidden bg-white">
              <Sheet />
              {/* charts float over the cells */}
              <div className="absolute left-[914px] top-[52px]"><BarChart /></div>
              <div className="absolute left-[914px] top-[287px]"><DonutChart /></div>
              <div className="absolute left-[914px] top-[521px] w-[420px] h-[208px] bg-white border border-[#d9d9d9]" />
            </div>
            <div className="w-[9px] shrink-0 bg-[#cecece] px-px pt-0.5">
              <div className="h-[76px] w-1.5 rounded-full bg-[#828282]" />
            </div>
          </div>
          <div className="h-2.5 shrink-0 flex items-center bg-[#cecece] pl-0.5 mr-[9px]">
            <div className="w-[47%] h-1.5 rounded-full bg-[#7f8080] mr-auto" />
            <div className="w-0.5 h-2 bg-[#555]" />
          </div>
          <SheetTabs />
        </main>
        <Sidebar />
      </div>
      <StatusBar />
    </div>
  );
}
